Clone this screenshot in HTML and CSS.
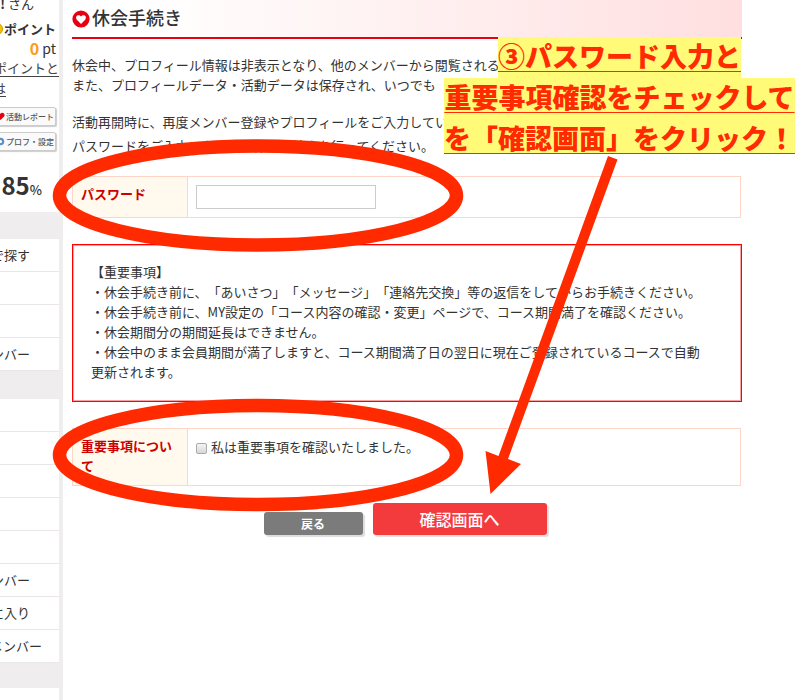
FILE: index.html
```html
<!DOCTYPE html>
<html lang="ja">
<head>
<meta charset="utf-8">
<title>休会手続き</title>
<link rel="stylesheet" href="styles.css">
</head>
<body>
<div class="page">
  <aside class="sidebar">
    <section class="status">
      <p class="line name"><b>!</b>&nbsp;さん</p>
      <p class="line points"><svg class="coin" viewBox="0 0 12 12" aria-hidden="true"><circle cx="6" cy="6" r="5.5" fill="#f5c400" stroke="#c99a00"/></svg>ポイント</p>
      <p class="line pt"><b>0</b>&nbsp;pt</p>
      <a class="about" href="#"><span>ポイントと</span><span class="rest">は</span></a>
      <button class="mini" type="button"><svg viewBox="0 0 10 10" aria-hidden="true"><path d="M5 9 1 5C-1 2 3-1 5 2c2-3 6 0 4 3z" fill="#e60012"/></svg>活動レポート</button>
      <button class="mini" type="button"><svg viewBox="0 0 10 10" aria-hidden="true"><circle cx="5" cy="5" r="3" fill="none" stroke="#5b92c8" stroke-width="2.4"/></svg>プロフ・設定</button>
      <p class="rate">85<small>%</small></p>
    </section>
    <ul class="menu">
      <li><a href="#">で探す</a></li><li></li><li></li><li><a href="#">ンバー</a></li>
    </ul>
    <ul class="menu">
      <li></li><li></li><li></li><li></li><li></li>
      <li><a href="#">ンバー</a></li><li><a href="#">に入り</a></li><li class="long"><a href="#">メンバー</a></li>
    </ul>
    <div class="menu-end"></div>
  </aside>

  <main class="main">
    <header class="title">
      <svg viewBox="0 0 18 18" aria-hidden="true"><circle cx="9" cy="9" r="8.6" fill="#e60012"/><path d="M9 14 4.8 9.7C2.4 6.4 6.7 3.4 9 6.6c2.3-3.2 6.6-.2 4.2 3.1z" fill="#fff"/></svg>
      <h1>休会手続き</h1>
    </header>
    <p class="lead">休会中、プロフィール情報は非表示となり、他のメンバーから閲覧される<br>また、プロフィールデータ・活動データは保存され、いつでも</p>
    <p class="lead">活動再開時に、再度メンバー登録やプロフィールをご入力してい</p>
    <p class="lead guide">パスワードをご入力いただき、休会手続きを行ってください。</p>

    <form>
      <table class="fields">
        <tr>
          <th scope="row"><label for="password">パスワード</label></th>
          <td><input class="password" id="password" type="password"></td>
        </tr>
      </table>
      <section class="notice">
        <p>【重要事項】</p>
        <p>・休会手続き前に、「あいさつ」「メッセージ」「連絡先交換」等の返信をしてからお手続きください。</p>
        <p>・休会手続き前に、MY設定の「コース内容の確認・変更」ページで、コース期間満了を確認ください。</p>
        <p>・休会期間分の期間延長はできません。</p>
        <p>・休会中のまま会員期間が満了しますと、コース期間満了日の翌日に現在ご登録されているコースで自動更新されます。</p>
      </section>
      <table class="fields">
        <tr>
          <th scope="row">重要事項について</th>
          <td><label class="agree"><input type="checkbox">私は重要事項を確認いたしました。</label></td>
        </tr>
      </table>
      <div class="actions">
        <button class="back" type="button">戻る</button>
        <button class="next" type="submit">確認画面へ</button>
      </div>
    </form>
  </main>

  <svg class="marks" width="800" height="700" viewBox="0 0 800 700" aria-hidden="true">
    <g fill="none" stroke="#ff2a00" stroke-width="13.5">
      <ellipse cx="258" cy="195.500" rx="198.5" ry="49.5"/>
      <ellipse cx="258" cy="455" rx="198.5" ry="49.5"/>
    </g>
    <path d="M608 156 617.5 159.5 508 459 521 464 490.500 494 485.500 451 498.500 456z" fill="#ff2a00"/>
  </svg>
  <div class="callout">
    <span>③パスワード入力と</span>
    <span>重要事項確認をチェックして</span>
    <span class="last">を「確認画面」をクリック！</span>
  </div>
</div>
</body>
</html>
```
FILE: styles.css
```css
* { box-sizing: border-box; }

body {
  margin: 0;
  background: #fff;
  color: #333;
  font: 13px/20px "Noto Sans CJK JP", sans-serif;
  text-spacing-trim: space-all;
}

p, h1, ul { margin: 0; padding: 0; }
ul { list-style: none; }
button, input { font-family: inherit; }

.page {
  position: relative;
  display: flex;
  min-height: 100vh;
  overflow: hidden;
}

/* Sidebar: contents are anchored right and run off the left edge */
.sidebar {
  flex: none;
  display: flex;
  flex-direction: column;
  width: 63px;
  padding-right: 4px;
  overflow: hidden;
  background: #efedee;
}

.status {
  display: flex;
  flex-direction: column;
  align-items: flex-end;
  height: 212px;
  background: #fff;
  white-space: nowrap;
}

.line { display: flex; align-items: center; padding-right: 3px; }
.name { height: 20px; padding: 0 25px 12px 0; }
.points { height: 18px; font-weight: bold; }
.coin { width: 12px; height: 12px; margin-right: 1px; }
.pt { height: 20px; font-size: 14px; }
.pt b { color: #ff9a1a; font-size: 16px; }

.about {
  display: flex;
  flex-direction: column;
  align-items: flex-end;
  margin-bottom: 9px;
  color: #444;
  line-height: 20px;
  text-decoration: underline;
  text-underline-offset: 3px;
}
.about span { height: 20px; }
.rest { padding-right: 53px; }

.mini {
  display: flex;
  align-items: center;
  height: 19px;
  margin: 0 3px 6px 0;
  padding: 0 1px;
  border: 1px solid #ccc;
  border-radius: 2px;
  background: #fafafa;
  box-shadow: 1px 1px 1px #ccc;
  color: #555;
  font-size: 8px;
  font-weight: 500;
  white-space: nowrap;
  text-spacing-trim: normal;
}
.mini svg { width: 9px; height: 9px; margin-right: 1px; }

.rate {
  margin-top: 12px;
  padding-right: 17px;
  font-size: 24px;
  font-weight: bold;
  line-height: 32px;
}
.rate small { font-size: 13px; font-weight: 500; }

.menu { margin-top: 27px; background: #fff; }
.menu + .menu { margin-top: 28px; }
.menu li {
  display: flex;
  justify-content: flex-end;
  align-items: center;
  height: 33px;
  padding-right: 29px;
  border-bottom: 1px solid #e8e6e7;
  white-space: nowrap;
}
.menu .long { padding-right: 17px; }
.menu a { color: #333; text-decoration: none; }
.menu-end { flex: 1; margin-top: 25px; background: #fff; }

/* Main column */
.main { flex: 1; min-width: 0; padding: 0 58px 0 9px; }

.title {
  display: flex;
  align-items: center;
  gap: 2px;
  height: 39px;
  margin-bottom: 16px;
  border-bottom: 2px solid #e60012;
  background: linear-gradient(to right, #fff 10%, #ffdfe0);
}
.title svg { width: 18px; height: 18px; }
.title h1 { padding-bottom: 2px; font-size: 18px; font-weight: 500; line-height: 35px; }

.lead { margin-bottom: 17px; white-space: nowrap; }
.guide { margin: -13px 0 20px; }

.fields {
  width: calc(100% - 1px);
  border-collapse: collapse;
  table-layout: fixed;
}
.fields th, .fields td {
  height: 41px;
  padding: 8px;
  border: 1px solid #ffd5c8;
  text-align: left;
  vertical-align: top;
}
.fields th {
  width: 115px;
  padding: 7px 8px 9px;
  background: #fffaed;
  color: #c00;
}

.password {
  display: block;
  width: 180px;
  height: 24px;
  border: 1px solid #ccc;
  background: #fff;
}

.notice {
  margin: 26px 0;
  padding: 17px 34px 19px 18px;
  border: 1px solid #f00;
  box-shadow: inset 0 0 0 1px #ffa0a0;
}

.agree { display: flex; align-items: center; gap: 4px; }
.agree input {
  appearance: none;
  width: 11px;
  height: 11px;
  margin: 3px 0 0;
  border: 1px solid #aaa;
  border-radius: 2px;
  background: linear-gradient(#f4f4f4, #d8d8d8);
}

.actions {
  display: flex;
  justify-content: center;
  align-items: flex-end;
  gap: 10px;
  margin-top: 17px;
  padding-right: 4px;
}
.actions button {
  padding: 0;
  border: 0;
  border-radius: 3px;
  box-shadow: 2px 2px 1px #ddd;
  color: #fff;
}
.back {
  width: 99px;
  height: 23px;
  background: #7b7b7b;
  font-size: 12px;
  font-weight: bold;
}
.next {
  width: 174px;
  height: 32px;
  background: #f33a3d;
  font-size: 16px;
  font-weight: 500;
}

/* Annotations laid over the page */
.marks { position: absolute; top: 0; left: 0; pointer-events: none; }

.callout {
  position: absolute;
  top: 37px;
  right: 5px;
  display: flex;
  flex-direction: column;
  align-items: center;
  color: #ff2a00;
  font-size: 27px;
  font-weight: 900;
  line-height: 37px;
  white-space: nowrap;
}
.callout span {
  height: 41px;
  background: #fffa78;
  text-decoration: underline 1px;
  text-decoration-skip-ink: none;
  text-underline-offset: 4px;
}
.callout .last { height: 35px; }
```
